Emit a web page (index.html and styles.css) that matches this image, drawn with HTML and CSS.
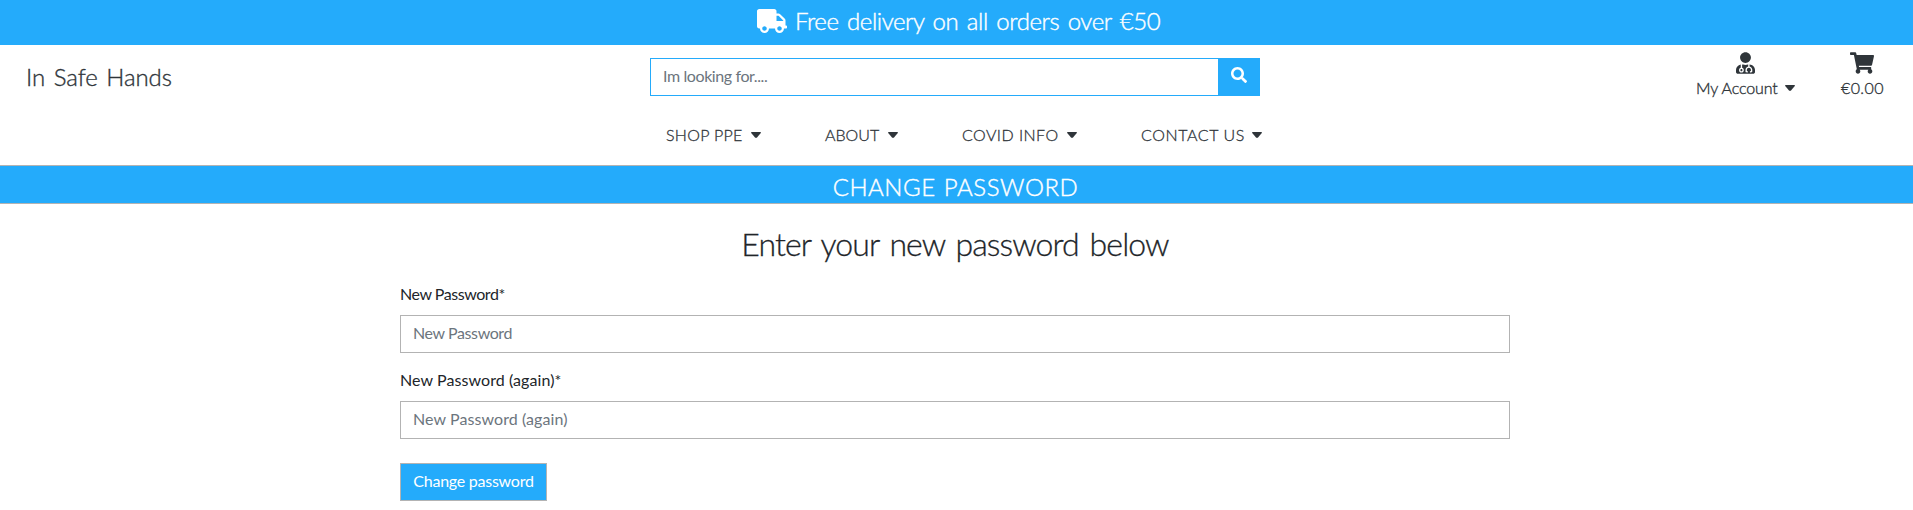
FILE: index.html
```html
<!DOCTYPE html>
<html lang="en">
<head>
<meta charset="utf-8">
<title>In Safe Hands</title>
<link rel="stylesheet" href="styles.css">
</head>
<body>
<div class="banner">
  <svg class="truck" viewBox="0 0 640 512"><path d="M624 352h-16V243.900c0-12.700-5.100-24.900-14.100-33.900L494 110.100c-9-9-21.200-14.100-33.900-14.100H416V48c0-26.500-21.500-48-48-48H48C21.500 0 0 21.500 0 48v320c0 26.500 21.500 48 48 48h16c0 53 43 96 96 96s96-43 96-96h128c0 53 43 96 96 96s96-43 96-96h48c8.800 0 16-7.200 16-16v-32c0-8.800-7.200-16-16-16zM160 464c-26.500 0-48-21.500-48-48s21.500-48 48-48 48 21.500 48 48-21.500 48-48 48zm320 0c-26.500 0-48-21.500-48-48s21.500-48 48-48 48 21.500 48 48-21.500 48-48 48zm80-208H416V144h44.100l99.900 99.900V256z"/></svg>
  <span class="banner-text">Free delivery on all orders over €50</span>
</div>
<header class="header">
  <a class="brand">In Safe Hands</a>
  <form class="search">
    <input class="search-input" type="text" placeholder="Im looking for....">
    <button class="search-button" type="button" aria-label="Search"><svg viewBox="0 0 512 512"><path d="M505 442.700L405.300 343c-4.500-4.500-10.600-7-17-7H372c27.600-35.300 44-79.700 44-128C416 93.100 322.900 0 208 0S0 93.100 0 208s93.100 208 208 208c48.300 0 92.700-16.400 128-44v16.300c0 6.400 2.500 12.500 7 17l99.700 99.700c9.400 9.400 24.600 9.400 33.900 0l28.300-28.300c9.400-9.400 9.400-24.600.1-34zM208 336c-70.700 0-128-57.200-128-128 0-70.700 57.200-128 128-128 70.700 0 128 57.200 128 128 0 70.700-57.200 128-128 128z"/></svg></button>
  </form>
  <div class="tools">
    <a class="tool account">
      <svg class="user" viewBox="0 0 448 512"><path d="M224 256c70.700 0 128-57.300 128-128S294.700 0 224 0 96 57.300 96 128s57.300 128 128 128zM104 424c0 13.300 10.700 24 24 24s24-10.700 24-24-10.700-24-24-24-24 10.700-24 24zm216-135.400v49c36.500 7.400 64 39.800 64 78.400v41.700c0 7.600-5.400 14.200-12.900 15.700l-32.200 6.400c-4.300.9-8.500-1.900-9.400-6.300l-3.100-15.700c-.9-4.300 1.900-8.600 6.300-9.400l19.300-3.900V416c0-62.800-96-65.100-96 1.900v26.700l19.300 3.900c4.300.9 7.100 5.100 6.300 9.400l-3.100 15.700c-.9 4.300-5.100 7.100-9.400 6.300l-31.200-4.200c-7.900-1.100-13.800-7.800-13.800-15.900V416c0-38.600 27.500-70.900 64-78.400v-45.200c-2.200.7-4.400 1.100-6.600 1.900-18 6.300-37.300 9.800-57.400 9.800s-39.400-3.500-57.400-9.800c-7.400-2.600-14.900-4.200-22.600-5.200v81.600c23.100 6.900 40 28.100 40 53.400 0 30.900-25.100 56-56 56s-56-25.100-56-56c0-25.300 16.900-46.500 40-53.400v-80.400C48.500 301 0 355.800 0 422.400v44.800C0 491.900 20.100 512 44.800 512h358.400c24.700 0 44.800-20.100 44.800-44.800v-44.800c0-72-56.800-130.300-128-133.800z"/></svg>
      <span class="tool-label"><span class="account-text">My Account</span><i class="caret"></i></span>
    </a>
    <a class="tool cart">
      <svg class="trolley" viewBox="0 0 576 512"><path d="M528.100 301.300l47.300-208C578.800 78.300 567.400 64 552 64H159.200l-9.200-44.800C147.800 8 137.900 0 126.500 0H24C10.700 0 0 10.700 0 24v16c0 13.300 10.700 24 24 24h69.900l70.200 343.400C147.300 417.100 136 435.200 136 456c0 30.900 25.100 56 56 56s56-25.100 56-56c0-15.700-6.400-29.800-16.800-40h209.600C430.400 426.200 424 440.300 424 456c0 30.900 25.100 56 56 56s56-25.100 56-56c0-22.200-12.900-41.300-31.600-50.400l5.500-24.300c3.400-15-8-29.300-23.400-29.300H218.100l-6.500-32h293.100c11.200 0 20.900-7.800 23.400-18.700z"/></svg>
      <span class="tool-label"><span class="cart-text">€0.00</span></span>
    </a>
  </div>
</header>
<nav class="nav">
  <a class="nav-item"><span class="nav-shop">SHOP PPE</span><i class="caret"></i></a>
  <a class="nav-item"><span class="nav-about">ABOUT</span><i class="caret"></i></a>
  <a class="nav-item"><span class="nav-covid">COVID INFO</span><i class="caret"></i></a>
  <a class="nav-item"><span class="nav-contact">CONTACT US</span><i class="caret"></i></a>
</nav>
<div class="title-bar"><span class="title-text">CHANGE PASSWORD</span></div>
<main class="content">
  <h2 class="heading"><span class="heading-text">Enter your new password below</span></h2>
  <form class="form">
    <label class="label" for="p1"><span class="label-one">New Password*</span></label>
    <input class="field field-one" id="p1" type="password" placeholder="New Password">
    <label class="label" for="p2"><span class="label-two">New Password (again)*</span></label>
    <input class="field field-two" id="p2" type="password" placeholder="New Password (again)">
    <button class="submit" type="button"><span class="submit-text">Change password</span></button>
  </form>
</main>
</body>
</html>
```
FILE: styles.css
```css
* { box-sizing: border-box; }
body { margin: 0; height: 510px; overflow: hidden; background: #fff; color: #212529; font-family: Lato, sans-serif; font-size: 16px; font-weight: 400; line-height: 24px; }
span { white-space: nowrap; }
svg { display: block; fill: currentColor; flex: none; }
input, button { font: inherit; border-radius: 0; margin: 0; outline: 0; }
input::placeholder { color: #6c757d; opacity: 1; }

.banner { height: 45px; padding: 0 0 4px 757px; display: flex; align-items: center; gap: 8px; background: #24abfb; color: #fff; font-size: 24px; font-weight: 300; line-height: 36px; }
.truck { width: 30px; height: 24px; }
.banner-text { letter-spacing: -0.45px; word-spacing: 2.5px; -webkit-text-stroke: 0.4px #fff; }

.header { height: 71px; display: flex; align-items: flex-start; color: #2f353a; }
.brand { width: 650px; padding: 14px 0 0 26px; font-size: 24px; font-weight: 300; line-height: 36px; word-spacing: 2px; letter-spacing: -0.05px; -webkit-text-stroke: 0.35px #2f353a; }
.search { width: 610px; margin-top: 13px; display: flex; }
.search-input { width: 568px; height: 38px; padding: 0 12px 3px; border: 1px solid #24abfb; border-right: 0; letter-spacing: -0.4px; }
.search-button { width: 42px; height: 38px; padding: 9px 13px 13px; border: 0; background: #24abfb; color: #fff; }
.search-button svg { width: 16px; height: 16px; }
.tools { flex: 1; display: flex; justify-content: flex-end; gap: 46px; padding: 7px 29px 0 0; }
.tool { display: flex; flex-direction: column; align-items: center; }
.user { width: 19px; height: 22px; }
.trolley { width: 24px; height: 22px; margin-right: 2px; }
.tool-label { height: 24px; margin-top: 2px; display: flex; align-items: center; gap: 8px; font-weight: 300; -webkit-text-stroke: 0.35px #2f353a; }
.account-text { width: 81px; letter-spacing: -0.1px; }
.cart-text { width: 43px; letter-spacing: 0.4px; }
.caret { width: 10px; height: 6px; flex: none; background: #2f353a; clip-path: polygon(5% 0, 95% 0, 100% 12%, 58% 95%, 42% 95%, 0 12%); }

.nav { height: 49px; padding: 7px 0 0 666px; display: flex; color: #2f353a; font-weight: 300; -webkit-text-stroke: 0.3px #2f353a; }
.nav-item { height: 24px; margin-right: 64px; display: flex; align-items: center; gap: 9px; }
.nav-shop { width: 76px; letter-spacing: 0.3px; }
.nav-about { width: 54px; }
.nav-covid { width: 96px; letter-spacing: 0.45px; }
.nav-contact { width: 102px; letter-spacing: 0.6px; }

.title-bar { height: 39px; padding-top: 3px; border: solid #b3b3b3; border-width: 1px 0; background: #24abfb; color: #fff; font-size: 24px; font-weight: 300; line-height: 36px; text-align: center; }
.title-text { margin-right: 2px; letter-spacing: 0.55px; word-spacing: 1px; -webkit-text-stroke: 0.4px #fff; }

.content { width: 1110px; margin-left: 400px; padding-top: 20px; }
.heading { margin: 0; font-size: 32px; font-weight: 300; line-height: 40px; text-align: center; }
.heading-text { letter-spacing: -0.9px; word-spacing: 3px; -webkit-text-stroke: 0.3px #212529; }
.form { display: flex; flex-direction: column; align-items: flex-start; padding-top: 18px; }
.label { height: 24px; margin-bottom: 9px; }
.label-one { letter-spacing: -0.45px; }
.label-two { letter-spacing: 0.08px; }
.field { width: 1110px; height: 38px; margin-bottom: 15px; padding: 0 12px 3px; border: 1px solid #b3b3b3; }
.field-one { letter-spacing: -0.4px; }
.field-two { letter-spacing: 0.08px; }
.submit { width: 147px; height: 38px; margin-top: 9px; padding: 0 0 2px; border: 1px solid #b3b3b3; background: #24abfb; color: #fff; letter-spacing: -0.25px; }
```
